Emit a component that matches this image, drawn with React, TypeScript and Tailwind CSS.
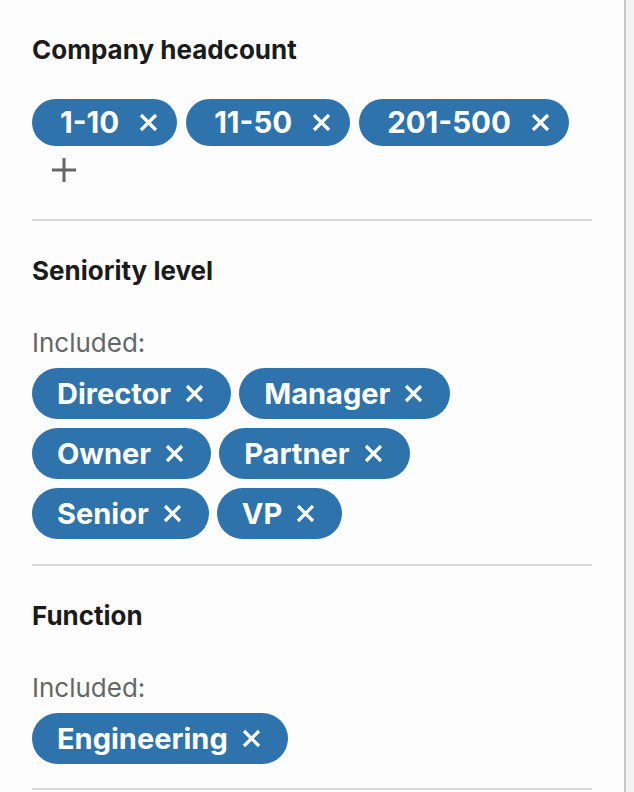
const font = { fontFamily: 'Inter, "Noto Sans", sans-serif' }

function XIcon() {
  return (
    <svg width="19" height="19" viewBox="0 0 19 19" className="shrink-0">
      <path d="M2 2L17 17M17 2L2 17" stroke="white" strokeWidth="3.2" strokeLinecap="butt" />
    </svg>
  )
}

function Chip({ label, wide }: { label: string; wide?: boolean }) {
  return (
    <span
      className={
        wide
          ? 'inline-flex h-[47px] items-center gap-5 rounded-full bg-[#2e73ab] pl-7 pr-[19px] text-[29.5px] font-bold text-white'
          : 'inline-flex h-[51px] items-center gap-[14px] rounded-full bg-[#2e73ab] pl-[25px] pr-[27px] text-[29px] font-bold text-white'
      }
    >
      <span className="leading-none">{label}</span>
      <XIcon />
    </span>
  )
}

function Section({ title, included, children, pb }: { title: string; included?: boolean; children: React.ReactNode; pb: string }) {
  return (
    <div className={'border-b-2 border-[#d9d9d9] ' + pb}>
      <h3 className="text-[26px] font-bold leading-8 text-[#1b1b1b]">{title}</h3>
      {included && <p className="mt-[40px] text-[26px] leading-8 text-[#666666]">Included:</p>}
      {children}
    </div>
  )
}

export default function App() {
  return (
    <div className="flex h-[792px] w-[634px] bg-[#f3f3f3]" style={font}>
      <div className="flex w-[626px] flex-col gap-[34px] border-r-2 border-[#c6c6c6] bg-[#fdfdfd] px-8 pt-[34px]">
        <Section title="Company headcount" pb="pb-[37px]">
          <div className="mt-[33px] flex flex-wrap gap-[9px]">
            <Chip label="1-10" wide />
            <Chip label="11-50" wide />
            <Chip label="201-500" wide />
          </div>
          <div className="mt-3 pl-5">
            <svg width="24" height="24" viewBox="0 0 24 24">
              <path d="M12 0V24M0 12H24" stroke="#666666" strokeWidth="3" />
            </svg>
          </div>
        </Section>
        <Section title="Seniority level" included pb="pb-[25px]">
          <div className="mt-[9px] flex flex-wrap gap-x-2 gap-y-[9px]">
            <Chip label="Director" />
            <Chip label="Manager" />
            <Chip label="Owner" />
            <Chip label="Partner" />
            <Chip label="Senior" />
            <Chip label="VP" />
          </div>
        </Section>
        <Section title="Function" included pb="pb-6">
          <div className="mt-[9px] flex flex-wrap gap-2">
            <Chip label="Engineering" />
          </div>
        </Section>
      </div>
    </div>
  )
}
